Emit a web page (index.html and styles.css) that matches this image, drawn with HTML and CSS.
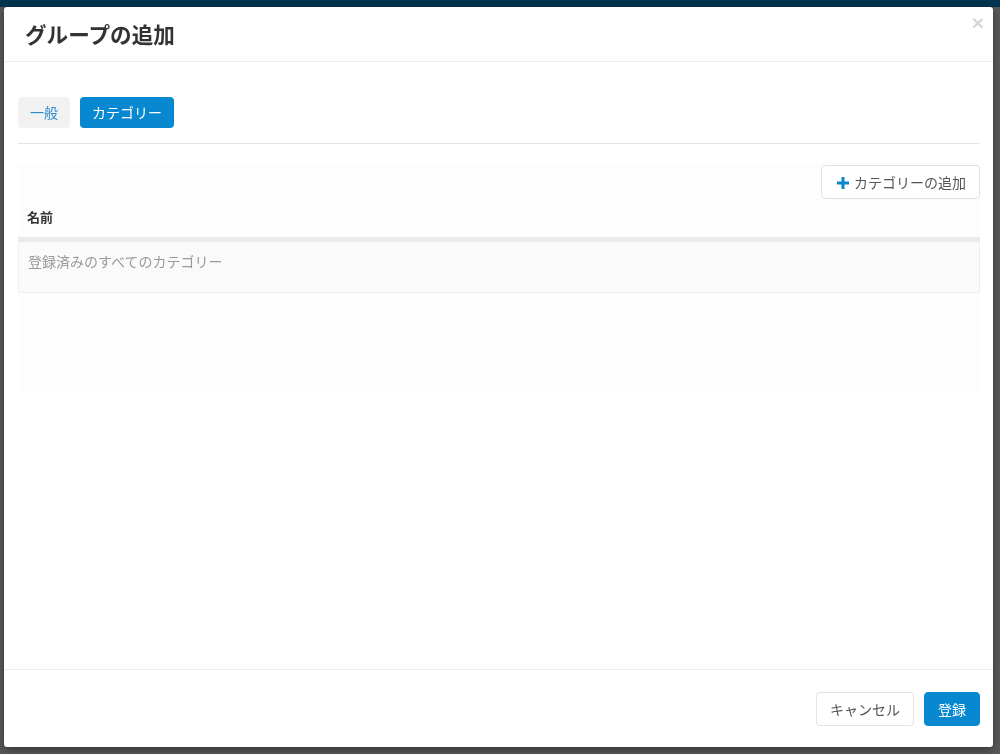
FILE: index.html
```html
<!DOCTYPE html>
<html lang="ja">
<head>
<meta charset="utf-8">
<link rel="stylesheet" href="styles.css">
</head>
<body>
<div class="page">
  <div class="topbar"></div>
</div>
<div class="backdrop"></div>
<div class="modal">
  <div class="modal-header">
    <h1 class="modal-title">グループの追加</h1>
    <span class="close">×</span>
  </div>
  <div class="modal-body">
    <div class="tabs">
      <button class="tab">一般</button>
      <button class="tab active">カテゴリー</button>
    </div>
    <div class="divider"></div>
    <div class="panel">
      <div class="panel-actions">
        <button class="btn btn-default add-btn"><svg class="plus" viewBox="0 0 12 12" width="12" height="12"><path d="M4.5 0h3v4.5H12v3H7.5V12h-3V7.5H0v-3h4.5z" fill="#0a86cc"/></svg>カテゴリーの追加</button>
      </div>
      <div class="table">
        <div class="th">名前</div>
        <div class="row">登録済みのすべてのカテゴリー</div>
      </div>
    </div>
  </div>
  <div class="modal-footer">
    <button class="btn btn-default">キャンセル</button>
    <button class="btn btn-primary">登録</button>
  </div>
</div>
</body>
</html>
```
FILE: styles.css
```css
* { box-sizing: border-box; }
html, body { margin: 0; height: 100%; }
body {
  font-family: "Noto Sans CJK JP", "Noto Sans", sans-serif;
  background: #ffffff;
  overflow: hidden;
}
.page { height: 100%; }
.topbar { height: 7px; background: #0b96e6; }
.backdrop {
  position: fixed;
  inset: 0;
  background: rgba(0,0,0,0.65);
}
.modal {
  position: absolute;
  top: 7px;
  left: 4px;
  width: 989px;
  height: 740px;
  background: #fff;
  border-radius: 3px;
  box-shadow: 0 3px 10px rgba(0,0,0,0.4);
  display: flex;
  flex-direction: column;
}
.modal-header {
  height: 55px;
  border-bottom: 1px solid #ececec;
  padding: 0 9px 0 21px;
  display: flex;
  align-items: center;
  justify-content: space-between;
}
.modal-title {
  margin: 0;
  font-size: 21.6px;
  font-weight: 700;
  color: #333;
  line-height: 1;
  margin-top: -1px;
}
.close {
  font-family: "Liberation Sans", sans-serif;
  font-size: 21px;
  font-weight: 700;
  color: #d6d6d6;
  align-self: flex-start;
  margin-top: 5px;
  line-height: 1;
}
.modal-body {
  flex: 1;
  padding: 35px 13px 0 14px;
}
.tabs { display: flex; gap: 10px; }
.tab {
  font-family: inherit;
  font-size: 14px;
  border: none;
  border-radius: 4px;
  height: 31px;
  padding: 0 12px;
  background: #f2f2f2;
  color: #2b8ccc;
  line-height: 31px;
}
.tab.active { background: #0888d0; color: #fff; }
.divider { height: 1px; background: #e4e4ec; margin-top: 15px; }
.panel {
  margin-top: 20px;
  background: #fdfdfd;
  height: 228px;
}
.panel-actions { display: flex; justify-content: flex-end; padding-top: 1px; }
.btn {
  font-family: inherit;
  font-size: 14px;
  height: 34px;
  border-radius: 4px;
  padding: 0 12px;
  display: inline-flex;
  align-items: center;
  gap: 5px;
}
.btn-default { background: #fff; border: 1px solid #dfe3e8; color: #555; }
.btn-primary { background: #0888d0; border: 1px solid #0888d0; color: #fff; }
.plus { margin-top: 1px; }
.add-btn { padding: 0 13px 0 15px; }
.table { margin-top: 5px; }
.th {
  font-size: 13px;
  font-weight: 700;
  color: #333;
  padding: 0 9px;
  height: 38px;
  line-height: 26px;
  border-bottom: 5px solid #ebebeb;
}
.row {
  height: 51px;
  background: #fafafa;
  border: 1px solid #efefef;
  border-top: none;
  font-size: 14px;
  color: #9a9a9a;
  padding: 9px 9px 0;
}
.modal-footer {
  height: 78px;
  border-top: 1px solid #ececec;
  display: flex;
  justify-content: flex-end;
  align-items: flex-start;
  gap: 10px;
  padding: 22px 13px 0 0;
}
.modal-footer .btn { padding: 0 13px; }
```
